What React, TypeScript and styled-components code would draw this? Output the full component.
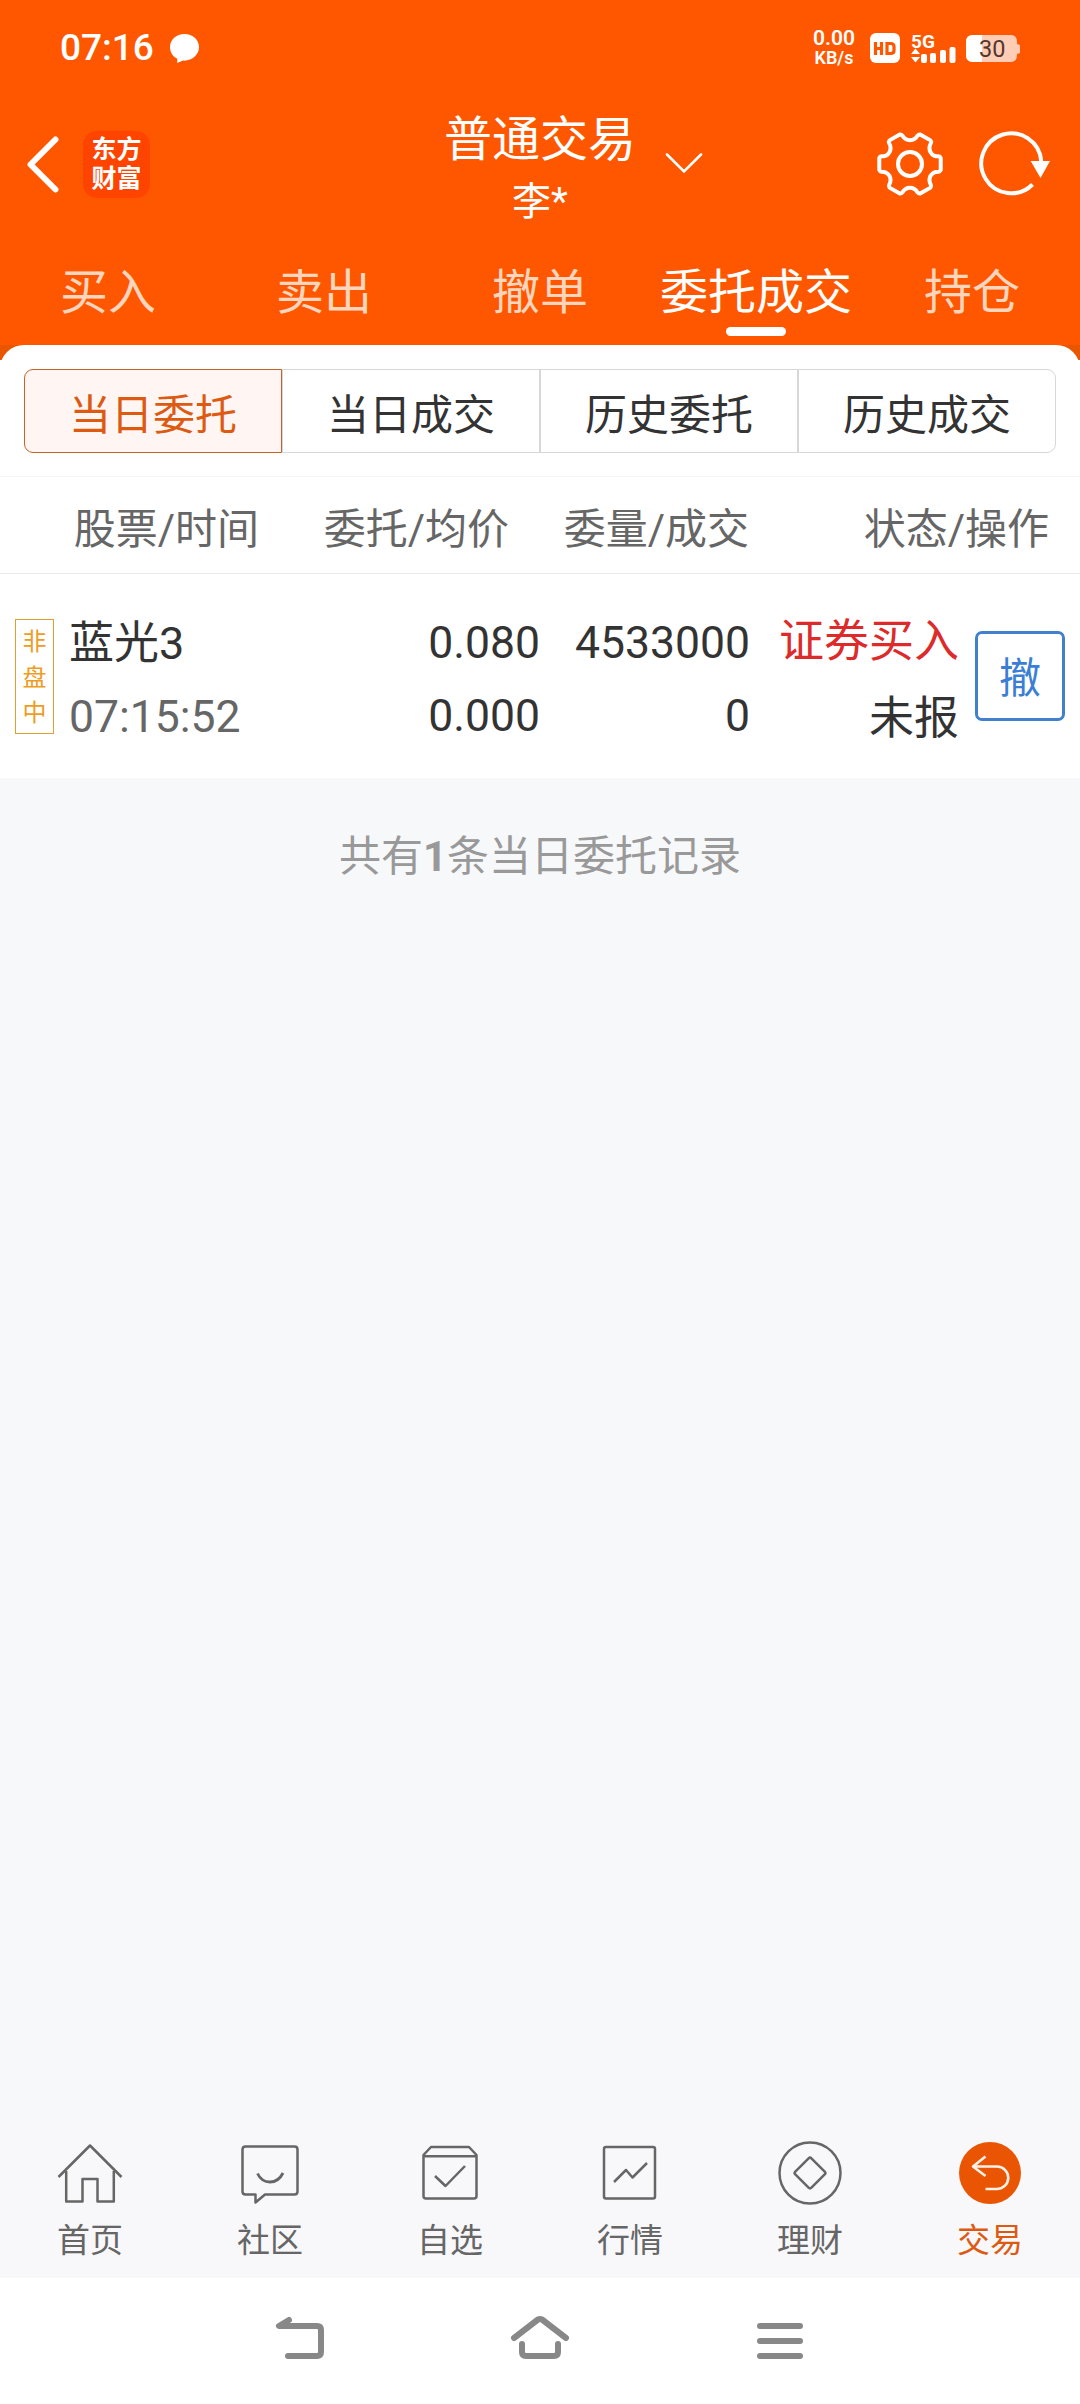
import React from "react";
import styled, { createGlobalStyle } from "styled-components";

const Global = createGlobalStyle`
  * { box-sizing: border-box; }
  body { margin: 0; background: #f7f8fa; font-family: Roboto, "Noto Sans CJK SC", sans-serif; }
`;

const Screen = styled.div`
  width: 1080px;
  height: 2404px;
  display: flex;
  flex-direction: column;
  background: #f7f8fa;
  white-space: nowrap;
`;

const Header = styled.header`
  height: 345px;
  flex: none;
  background: #ff5700;
  color: #fff;
  display: flex;
  flex-direction: column;
`;

const StatusBar = styled.div`
  height: 96px;
  display: flex;
  justify-content: space-between;
  align-items: center;
  padding: 0 60px 0 60px;
`;

const StatusGroup = styled.div`
  display: flex;
  align-items: center;
`;

const Clock = styled.span`
  font-size: 37px;
  font-weight: 500;
  line-height: 44px;
  width: 109px;
`;

const Speed = styled.div`
  display: flex;
  flex-direction: column;
  align-items: center;
  font-weight: 600;
  font-size: 18px;
  line-height: 19px;
  width: 42px;
  margin-right: 15px;
`;

const SpeedValue = styled.span`
  font-size: 21px;
`;

const StatusIcon = styled.svg<{ $gap?: number }>`
  display: block;
  margin-right: ${(p) => p.$gap ?? 0}px;
`;

const TitleBar = styled.div`
  height: 134px;
  display: grid;
  grid-template-columns: 1fr auto 1fr;
  align-items: center;
`;

const TitleLeft = styled.div`
  display: flex;
  align-items: center;
  gap: 24px;
  padding-left: 25px;
`;

const Logo = styled.div`
  width: 67px;
  height: 67px;
  border-radius: 14px;
  background: #ff4400;
  display: flex;
  flex-direction: column;
  align-items: center;
  justify-content: center;
  font-family: "Liberation Serif", "Noto Sans CJK SC", serif;
  font-size: 25px;
  font-weight: 700;
  line-height: 29px;
`;

const TitleText = styled.div`
  display: flex;
  flex-direction: column;
  align-items: center;
  padding-top: 12px;
`;

const Title = styled.div`
  font-size: 48px;
  line-height: 64px;
`;

const Account = styled.div`
  font-size: 39px;
  line-height: 60px;
`;

const TitleRight = styled.div`
  display: flex;
  align-items: center;
  justify-content: space-between;
  padding: 0 30px 0 29px;
`;

const Actions = styled.div`
  display: flex;
  align-items: center;
  gap: 34px;
`;

const Tabs = styled.nav`
  height: 115px;
  display: grid;
  grid-template-columns: repeat(5, 216px);
`;

const Tab = styled.div<{ $active?: boolean }>`
  display: flex;
  flex-direction: column;
  align-items: center;
  padding-top: 31px;
  font-size: 48px;
  line-height: 64px;
  color: ${(p) => (p.$active ? "#fff" : "#ffd6bd")};
  &::after {
    content: "";
    width: 60px;
    height: 9px;
    margin-top: 2px;
    border-radius: 4.5px;
    background: ${(p) => (p.$active ? "#fff" : "transparent")};
  }
`;

const SheetFrame = styled.div`
  flex: none;
  background: linear-gradient(#ea5500 15px, #fff 15px);
`;

const Sheet = styled.main`
  background: #fff;
  border-radius: 24px 24px 0 0;
  height: 433px;
  display: flex;
  flex-direction: column;
`;

const Segments = styled.div`
  display: grid;
  grid-template-columns: repeat(4, 258px);
  padding: 24px 24px 23px;
`;

const Segment = styled.div<{ $active?: boolean }>`
  height: 84px;
  display: flex;
  align-items: center;
  justify-content: center;
  font-size: 42px;
  border: 1px solid ${(p) => (p.$active ? "#c8622a" : "#d6d8d8")};
  color: ${(p) => (p.$active ? "#dc5a12" : "#333")};
  background: ${(p) => (p.$active ? "#fff6f3" : "#fff")};
  &:first-child { border-radius: 9px 0 0 9px; }
  &:last-child { border-radius: 0 9px 9px 0; }
`;

const TableHead = styled.div`
  height: 98px;
  border-top: 1px solid #f6f6f6;
  border-bottom: 1px solid #ebebeb;
  display: grid;
  grid-template-columns: 259px 250px 240px 300px;
  align-items: center;
  text-align: right;
  font-size: 42px;
  color: #666;
`;

const Row = styled.div`
  height: 204px;
  display: grid;
  grid-template-columns: 54px 200px 286px 210px 209px 106px;
  font-size: 45px;
  color: #333;
  padding-top: 45px;
`;

const Badge = styled.div`
  width: 39px;
  height: 115px;
  margin-left: 15px;
  border: 1px solid #e0a030;
  color: #ee9c22;
  font-size: 24px;
  line-height: 35.5px;
  display: flex;
  flex-direction: column;
  align-items: center;
  padding-top: 5px;
`;

const Pair = styled.div<{ $left?: boolean; $step?: number; $drop?: number }>`
  display: flex;
  flex-direction: column;
  align-items: ${(p) => (p.$left ? "flex-start" : "flex-end")};
  padding: ${(p) => p.$drop ?? 1}px 0 0 ${(p) => (p.$left ? 15 : 0)}px;
  line-height: 44px;
  gap: ${(p) => p.$step ?? 29}px;
`;

const Line = styled.span<{ $tone?: string; $digits?: boolean }>`
  color: ${(p) => p.$tone ?? "#333"};
  font-size: ${(p) => (p.$digits ? 44.5 : 45)}px;
`;

const CancelButton = styled.button`
  width: 90px;
  height: 90px;
  margin: 12px 0 0 16px;
  padding: 5px 0 0;
  border: 3px solid #4080cc;
  border-radius: 7px;
  background: #fff;
  color: #3a7fd5;
  font: 42px/60px Roboto, "Noto Sans CJK SC", sans-serif;
`;

const Summary = styled.div`
  flex: 1;
  padding-top: 49px;
  text-align: center;
  font-size: 42px;
  line-height: 60px;
  color: #999;
`;

const BottomNav = styled.nav`
  height: 158px;
  display: grid;
  grid-template-columns: repeat(6, 180px);
  background: #f8f8fa;
`;

const NavItem = styled.div<{ $active?: boolean }>`
  display: flex;
  flex-direction: column;
  align-items: center;
  padding-top: 21px;
  color: ${(p) => (p.$active ? "#dc5a12" : "#666")};
  font-size: 33px;
  line-height: 40px;
  gap: 16px;
`;

const SystemNav = styled.div`
  height: 126px;
  background: #fff;
  display: flex;
  justify-content: center;
  padding-top: 30px;
  gap: 176px;
`;

const navItems: { label: string; active?: boolean; art: React.ReactNode }[] = [
  {
    label: "首页",
    art: (
      <>
        <path d="M4.500 36 36 4.500 67.500 36" />
        <path d="M12.200 30V60.500H28.500V38H43.500V60.500H59.800V30" />
      </>
    ),
  },
  {
    label: "社区",
    art: (
      <>
        <path d="M11.500 5.500H60.500Q63.500 5.500 63.500 8.500V50.500Q63.500 53.500 60.500 53.500H31L21.500 61.500V53.500H11.500Q8.500 53.500 8.500 50.500V8.500Q8.500 5.500 11.500 5.500Z" />
        <path d="M23.500 32.500Q27.500 41 36 41T49 32" strokeWidth="2.800" />
      </>
    ),
  },
  {
    label: "自选",
    art: (
      <>
        <path d="M9.500 14 17 6H55L62.500 14V55Q62.500 57.500 60 57.500H12Q9.500 57.500 9.500 55ZM9.500 15.200H62.500" />
        <path d="M21 35 31.500 45 51 25" />
      </>
    ),
  },
  {
    label: "行情",
    art: (
      <>
        <rect x="10" y="6" width="51" height="51.500" rx="2" />
        <path d="M20 41 32 29 38.500 36.500 53 22" />
      </>
    ),
  },
  {
    label: "理财",
    art: (
      <>
        <circle cx="36" cy="32" r="30.500" />
        <rect x="24.600" y="20.600" width="22.800" height="22.800" rx="2" transform="rotate(45 36 32)" />
      </>
    ),
  },
  {
    label: "交易",
    active: true,
    art: (
      <>
        <circle cx="36" cy="32" r="31" fill="#ea5504" stroke="none" />
        <path d="M31.500 15.500 19 25.500 31.500 35M19 25.500H43A11.200 11.200 0 0 1 43 48H31.500" stroke="#fff1e6" strokeWidth="2.600" />
      </>
    ),
  },
];

function gearPath() {
  const pts: string[] = [];
  for (let i = 0; i < 6; i++) {
    const at = (deg: number, r: number) => {
      const a = ((deg + i * 60) * Math.PI) / 180;
      return `${(34 + r * Math.cos(a)).toFixed(2)} ${(34 + r * Math.sin(a)).toFixed(2)}`;
    };
    pts.push(`${i ? "L" : "M"}${at(-15, 29.5)}`);
    pts.push(`Q${at(-14, 31)} ${at(-11, 31.3)}`);
    pts.push(`L${at(11, 31.3)}`);
    pts.push(`Q${at(14, 31)} ${at(15, 29.5)}`);
    pts.push(`C${at(20, 22.5)} ${at(40, 22.5)} ${at(45, 29.5)}`);
  }
  return pts.join("") + "Z";
}

export default function App() {
  return (
    <Screen>
      <Global />
      <Header>
        <StatusBar>
          <StatusGroup>
            <Clock>07:16</Clock>
            <StatusIcon width="31" height="31" viewBox="0 0 32 32" fill="#fff">
              <path d="M16 1C7.500 1 1 7 1 14.500 1 20 4 24.500 8.500 26.500V31L14.500 28.500C24 29 31 22.500 31 14.500 31 7 24.500 1 16 1Z" />
            </StatusIcon>
          </StatusGroup>
          <StatusGroup>
            <Speed>
              <SpeedValue>0.00</SpeedValue>
              <span>KB/s</span>
            </Speed>
            <StatusIcon width="30" height="30" viewBox="0 0 30 30" $gap={11}>
              <rect width="30" height="30" rx="6" fill="#fff" />
              <path d="M5.500 9V22M11.500 9V22M5.500 15.500H11.500M17 10.500V20.500H20.500Q24 20.500 24 17.500V13.500Q24 10.500 20.500 10.500Z" fill="none" stroke="#ff5700" strokeWidth="3.200" />
            </StatusIcon>
            <StatusIcon width="45" height="40" viewBox="0 0 45 40" fill="#fff" $gap={10}>
              <text x="0" y="19.500" fontSize="19" fontWeight="700" fontFamily="Roboto, sans-serif">5G</text>
              <path d="M0 26 4.500 20.500 9 26ZM0 29 4.500 34.500 9 29Z" />
              <rect x="10" y="26" width="6" height="9" rx="2" />
              <rect x="19" y="25" width="6" height="10" rx="2" />
              <rect x="29" y="22" width="6" height="13" rx="2" />
              <rect x="38.500" y="19" width="6" height="16" rx="2" />
            </StatusIcon>
            <StatusIcon width="54" height="30" viewBox="0 -2 54 30">
              <path d="M7 0H45Q51 0 51 7V9L54 10V18L51 19V20Q51 27 45 27H7Q0 27 0 20V7Q0 0 7 0Z" fill="#ffccb5" />
              <path d="M7 0H16V27H7Q0 27 0 20V7Q0 0 7 0Z" fill="#fff" />
              <text x="13" y="22" fontSize="23.500" fill="#54382c" fontFamily="Roboto, sans-serif">30</text>
            </StatusIcon>
          </StatusGroup>
        </StatusBar>
        <TitleBar>
          <TitleLeft>
            <svg width="34" height="58" viewBox="0 0 34 58" fill="none" stroke="#fff" strokeWidth="6" strokeLinecap="round" strokeLinejoin="round">
              <path d="M30.500 4.500 5.500 29.500 30.500 54.500" />
            </svg>
            <Logo>
              <span>东方</span>
              <span>财富</span>
            </Logo>
          </TitleLeft>
          <TitleText>
            <Title>普通交易</Title>
            <Account>李*</Account>
          </TitleText>
          <TitleRight>
            <svg width="38" height="22" viewBox="0 0 38 22" fill="none" stroke="#fff" strokeWidth="2.600" strokeLinecap="round">
              <path d="M2 1.500 19 18.500 36 1.500" />
            </svg>
            <Actions>
              <svg width="68" height="68" viewBox="0 0 68 68" fill="none" stroke="#fff" strokeWidth="4" strokeLinejoin="round">
                <path d={gearPath()} />
                <circle cx="34" cy="34" r="12" />
              </svg>
              <svg width="72" height="68" viewBox="0 0 72 68" fill="none" stroke="#fff" strokeWidth="4">
                <path d="M63.200 31A30 30 0 1 0 54.500 54.500" />
                <path d="M52.700 31H72L62.500 48Z" fill="#fff" stroke="none" />
              </svg>
            </Actions>
          </TitleRight>
        </TitleBar>
        <Tabs>
          <Tab>买入</Tab>
          <Tab>卖出</Tab>
          <Tab>撤单</Tab>
          <Tab $active>委托成交</Tab>
          <Tab>持仓</Tab>
        </Tabs>
      </Header>
      <SheetFrame>
        <Sheet>
          <Segments>
            <Segment $active>当日委托</Segment>
            <Segment>当日成交</Segment>
            <Segment>历史委托</Segment>
            <Segment>历史成交</Segment>
          </Segments>
          <TableHead>
            <span>股票/时间</span>
            <span>委托/均价</span>
            <span>委量/成交</span>
            <span>状态/操作</span>
          </TableHead>
          <Row>
            <Badge>
              <span>非</span>
              <span>盘</span>
              <span>中</span>
            </Badge>
            <Pair $left $drop={3}>
              <Line>蓝光3</Line>
              <Line $tone="#666" $digits>07:15:52</Line>
            </Pair>
            <Pair $drop={2}>
              <Line $digits>0.080</Line>
              <Line $digits>0.000</Line>
            </Pair>
            <Pair $drop={2}>
              <Line $digits>4533000</Line>
              <Line $digits>0</Line>
            </Pair>
            <Pair $step={33}>
              <Line $tone="#dd2a2a">证券买入</Line>
              <Line>未报</Line>
            </Pair>
            <CancelButton>撤</CancelButton>
          </Row>
        </Sheet>
      </SheetFrame>
      <Summary>
        共有<b>1</b>条当日委托记录
      </Summary>
      <BottomNav>
        {navItems.map((item) => (
          <NavItem key={item.label} $active={item.active}>
            <svg width="72" height="64" viewBox="0 0 72 64" fill="none" stroke="#666" strokeWidth="2.500" strokeLinejoin="round">
              {item.art}
            </svg>
            <span>{item.label}</span>
          </NavItem>
        ))}
      </BottomNav>
      <SystemNav>
        <svg width="64" height="60" viewBox="0 0 64 60" fill="none" stroke="#888" strokeWidth="6" strokeLinecap="round" strokeLinejoin="round">
          <path d="M21 12 11 18H49Q53 18 53 22V44Q53 48 49 48H20" />
        </svg>
        <svg width="64" height="60" viewBox="0 0 64 60" fill="none" stroke="#888" strokeWidth="6" strokeLinecap="round" strokeLinejoin="round">
          <path d="M6 30 30 11.500Q32 10.500 34 11.500L58 30M14 36V44Q14 48 18 48H46Q50 48 50 44V36" />
        </svg>
        <svg width="64" height="60" viewBox="0 0 64 60" fill="none" stroke="#888" strokeWidth="6" strokeLinecap="round">
          <path d="M12 18H52M12 33H52M12 48H52" />
        </svg>
      </SystemNav>
    </Screen>
  );
}
